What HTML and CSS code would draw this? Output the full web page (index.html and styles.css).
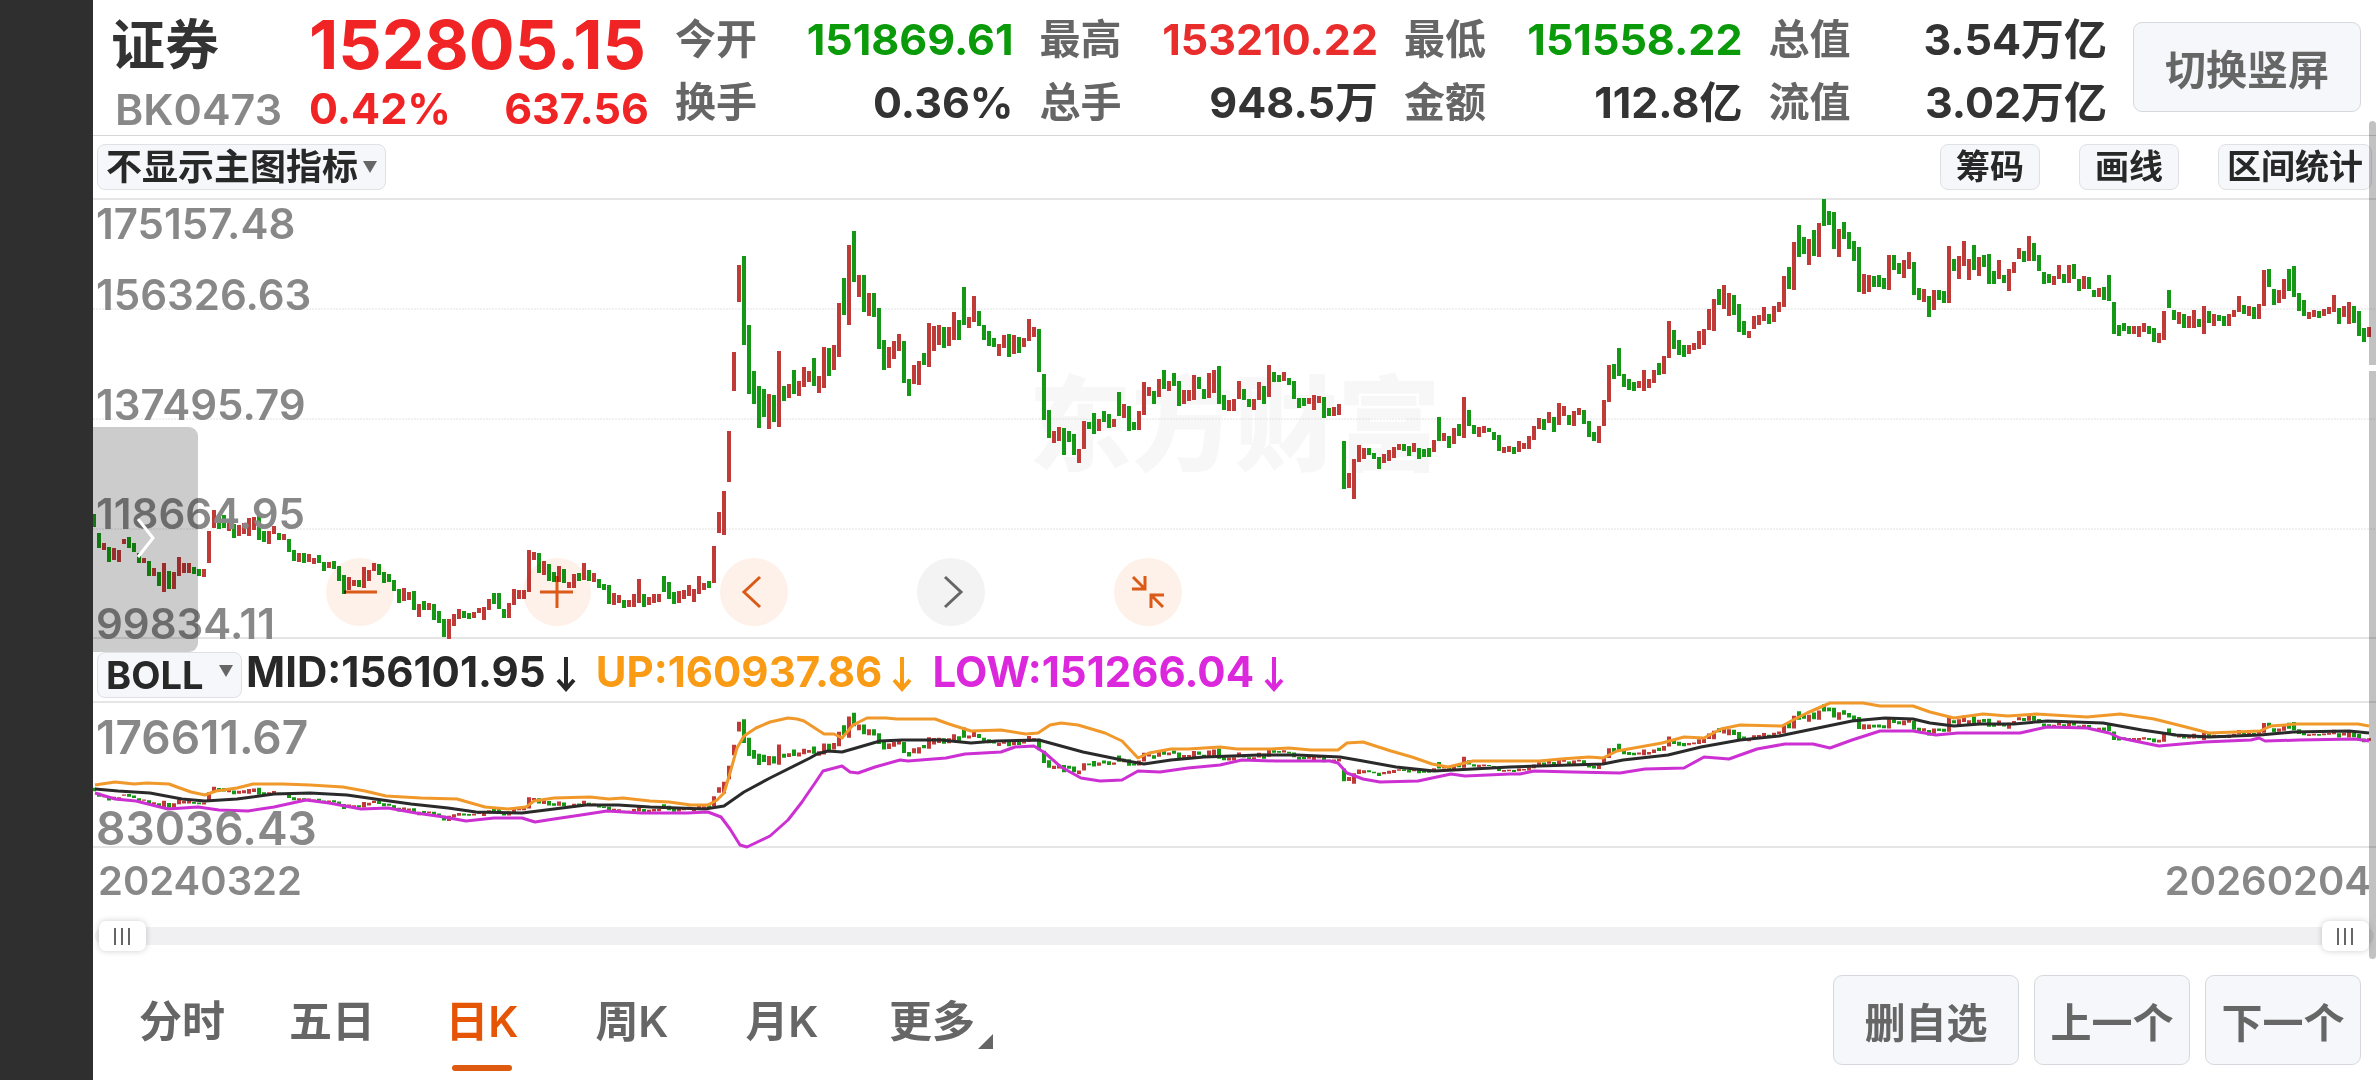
FILE: index.html
```html
<!DOCTYPE html>
<html lang="zh-CN">
<head>
  <meta charset="UTF-8" />
  <meta name="viewport" content="width=device-width, initial-scale=1.0"/>
  <title>证券 BK0473</title>
  <link rel="stylesheet" href="styles.css">
</head>
<body>

  <div class="side-bar"></div>

  <main class="page">
    <header class="quote-header">
      <div class="stock-name">
        <h1>证券</h1>
        <span>BK0473</span>
      </div>
      <div class="stock-price">
        <strong>152805.15</strong>
        <div class="change"><span>0.42%</span><span>637.56</span></div>
      </div>
      <dl class="quote-grid">
        <div><dt>今开</dt><dd class="down">151869.61</dd></div>
        <div><dt>最高</dt><dd class="up">153210.22</dd></div>
        <div><dt>最低</dt><dd class="down">151558.22</dd></div>
        <div><dt>总值</dt><dd>3.54万亿</dd></div>
        <div><dt>换手</dt><dd>0.36%</dd></div>
        <div><dt>总手</dt><dd>948.5万</dd></div>
        <div><dt>金额</dt><dd>112.8亿</dd></div>
        <div><dt>流值</dt><dd>3.02万亿</dd></div>
      </dl>
      <button type="button" class="btn">切换竖屏</button>
    </header>

    <div class="toolbar">
      <div class="select-box select-main">
        <select aria-label="主图指标">
          <option>不显示主图指标</option>
        </select>
        <svg class="caret" viewBox="0 0 14 12"><path d="M0 0h14L7 12z"/></svg>
      </div>
      <div class="toolbar-actions">
        <button type="button" class="btn-small">筹码</button>
        <button type="button" class="btn-small">画线</button>
        <button type="button" class="btn-small">区间统计</button>
      </div>
    </div>

    <section class="main-chart">
      <div class="watermark">东方财富</div>
      <svg class="plot" viewBox="0 0 2283 439" preserveAspectRatio="none">
        <path class="grid-dot" d="M0 110H2283M0 220H2283M0 330H2283"/>
        <path class="grid-line" d="M0 0H2283M0 439H2283"/>
        <path class="candle-up" id="mainUp"/>
        <path class="candle-down" id="mainDown"/>
      </svg>
      <div class="axis">
        <div><span>175157.48</span><span>156326.63</span></div>
        <div><span>137495.79</span></div>
        <div><span>118664.95</span></div>
        <div><span>99834.11</span></div>
      </div>
      <div class="chart-tools">
        <button type="button" class="round" aria-label="缩小">
          <svg viewBox="0 0 68 68"><path d="M18 34h33"/></svg>
        </button>
        <button type="button" class="round" aria-label="放大">
          <svg viewBox="0 0 68 68"><path d="M17 34h33M34 18v32"/></svg>
        </button>
        <button type="button" class="round" aria-label="左移">
          <svg viewBox="0 0 68 68"><path d="M40 19L24 34l16 15"/></svg>
        </button>
        <button type="button" class="round round-off" aria-label="右移">
          <svg viewBox="0 0 68 68"><path d="M28 19l16 15-16 15"/></svg>
        </button>
        <button type="button" class="round" aria-label="收起">
          <svg viewBox="0 0 68 68"><path d="M19 19l12 12M18 31h13V18M49 49L37 37M50 37H37v13"/></svg>
        </button>
      </div>
      <button type="button" class="drawer" aria-label="展开">
        <svg viewBox="0 0 20 40"><path d="M2 1l15 19L2 39"/></svg>
      </button>
    </section>

    <div class="boll-row">
      <div class="select-box select-boll">
        <select aria-label="副图指标">
          <option>BOLL</option>
        </select>
        <svg class="caret" viewBox="0 0 14 12"><path d="M0 0h14L7 12z"/></svg>
      </div>
      <span class="mid">MID:156101.95<svg class="arrow" viewBox="0 0 20 36"><path d="M10 1v32M2 24l8 9 8-9"/></svg></span>
      <span class="upper">UP:160937.86<svg class="arrow" viewBox="0 0 20 36"><path d="M10 1v32M2 24l8 9 8-9"/></svg></span>
      <span class="lower">LOW:151266.04<svg class="arrow" viewBox="0 0 20 36"><path d="M10 1v32M2 24l8 9 8-9"/></svg></span>
    </div>

    <section class="boll-chart">
      <svg class="plot" viewBox="0 0 2283 145" preserveAspectRatio="none">
        <path class="grid-line" d="M0 0H2283M0 145H2283"/>
        <path class="candle-up" id="bollUp"/>
        <path class="candle-down" id="bollDown"/>
        <polyline class="line-mid" id="lineMid"/>
        <polyline class="line-upper" id="lineUpper"/>
        <polyline class="line-lower" id="lineLower"/>
      </svg>
      <div class="boll-axis"><span>176611.67</span><span>83036.43</span></div>
    </section>

    <div class="dates"><span>20240322</span><span>20260204</span></div>

    <div class="range">
      <input type="range" min="0" max="100" value="0" aria-label="开始日期">
      <input type="range" min="0" max="100" value="100" aria-label="结束日期">
    </div>

    <footer class="bottom">
      <nav class="tabs">
        <a href="#">分时</a>
        <a href="#">五日</a>
        <a href="#" class="active">日K</a>
        <a href="#">周K</a>
        <a href="#">月K</a>
        <a href="#" class="more">更多</a>
      </nav>
      <div class="bottom-actions">
        <button type="button" class="btn btn-wide">删自选</button>
        <button type="button" class="btn">上一个</button>
        <button type="button" class="btn">下一个</button>
      </div>
    </footer>

    <div class="scroll-thumb thumb-top"></div>
    <div class="scroll-thumb thumb-bottom"></div>
  </main>

  <script src="chart.js"></script>
</body>
</html>
```
FILE: styles.css
```css
* {
  box-sizing: border-box;
}

body {
  font-family: Inter, 'Noto Sans CJK SC', sans-serif;
  margin: 0;
  min-height: 100vh;
  display: flex;
  background: #fff;
  color: #333;
}

h1, dl, dd {
  margin: 0;
}

button, select {
  font-family: inherit;
  cursor: pointer;
}

.side-bar {
  width: 93px;
  flex-shrink: 0;
  background: #2f2f2f;
}

.page {
  position: relative;
  flex: 1;
  min-width: 0;
  overflow: hidden;
  display: flex;
  flex-direction: column;
}

/* header */
.quote-header {
  display: flex;
  gap: 26px;
  height: 136px;
  padding: 8px 15px 0 18px;
  border-bottom: 1px solid #d6d6d6;
}

.stock-name {
  width: 172px;
}

.stock-name h1 {
  font-size: 54px;
  line-height: 76px;
  font-weight: 600;
}

.stock-name span {
  display: block;
  padding-left: 4px;
  font-size: 43px;
  line-height: 50px;
  font-weight: 600;
  color: #888;
}

.stock-price {
  width: 340px;
  color: #f02424;
}

.stock-price strong {
  display: block;
  font-size: 68px;
  line-height: 72px;
  font-weight: 700;
}

.change {
  display: flex;
  justify-content: space-between;
  font-size: 43px;
  line-height: 56px;
  font-weight: 700;
}

.quote-grid {
  flex: 1;
  display: grid;
  grid-template-columns: repeat(4, 1fr);
  column-gap: 26px;
  grid-auto-rows: 63px;
}

.quote-grid div {
  display: flex;
  justify-content: space-between;
  line-height: 63px;
  white-space: nowrap;
}

.quote-grid dt {
  font-size: 41px;
  font-weight: 600;
  color: #666;
}

.quote-grid dd {
  font-size: 43px;
  font-weight: 700;
}

.quote-grid .up {
  color: #e92c2c;
}

.quote-grid .down {
  color: #0a9a0a;
}

.btn {
  height: 90px;
  min-width: 156px;
  padding: 0 12px;
  border: 1px solid #d5d8dc;
  border-radius: 9px;
  background: #f6f7fa;
  color: #666;
  font-size: 41px;
  font-weight: 600;
  white-space: nowrap;
}

.quote-header .btn {
  margin-top: 14px;
  width: 228px;
}

/* toolbar */
.toolbar {
  display: flex;
  justify-content: space-between;
  height: 63px;
  padding: 8px 4px 0;
}

.select-box {
  position: relative;
  height: 46px;
}

.select-box select,
.btn-small {
  appearance: none;
  height: 46px;
  border: 1px solid #dfe1e5;
  border-radius: 8px;
  background: #f6f7fa;
  color: #282828;
  font-weight: 600;
  line-height: 44px;
}

.select-box select {
  width: 100%;
  padding: 0 8px;
  font-size: 36px;
}

.select-main {
  width: 289px;
}

.select-boll {
  width: 145px;
}

.select-boll select {
  font-size: 38px;
  font-weight: 700;
}

.caret {
  position: absolute;
  right: 9px;
  top: 17px;
  width: 14px;
  height: 12px;
  fill: #666;
  pointer-events: none;
}

.toolbar-actions {
  display: flex;
  gap: 39px;
}

.btn-small {
  min-width: 100px;
  padding: 0 8px;
  font-size: 34px;
  white-space: nowrap;
}

/* charts */
.main-chart {
  position: relative;
  height: 439px;
}

.boll-chart {
  position: relative;
  height: 145px;
}

.plot {
  position: relative;
  display: block;
  width: 100%;
  height: 100%;
  overflow: visible;
}

.plot path,
.plot polyline {
  fill: none;
}

.grid-line {
  stroke: #e5e5e5;
  stroke-width: 2;
}

.grid-dot {
  stroke: #e2e2e2;
  stroke-width: 1;
  stroke-dasharray: 2 1;
}

.candle-up {
  stroke: #c03a38;
  stroke-width: 4;
}

.candle-down {
  stroke: #159815;
  stroke-width: 4;
}

.line-mid,
.line-upper,
.line-lower {
  stroke-width: 3;
  stroke-linejoin: round;
}

.line-mid {
  stroke: #2a2a2a;
}

.line-upper {
  stroke: #f0992a;
}

.line-lower {
  stroke: #cc30d2;
}

.watermark {
  position: absolute;
  inset: 0;
  display: flex;
  align-items: center;
  justify-content: center;
  font-size: 103px;
  font-weight: 900;
  color: #f7f7f7;
}

.axis {
  position: absolute;
  inset: 0 auto 0 0;
  display: grid;
  grid-template-rows: repeat(4, 1fr);
  padding-left: 3px;
  font-size: 42px;
  line-height: 28px;
  font-weight: 600;
  color: #888;
}

.axis div {
  display: flex;
  flex-direction: column;
  justify-content: flex-end;
}

.axis div:first-child {
  justify-content: space-between;
  padding-top: 11px;
}

.chart-tools {
  position: absolute;
  left: 233px;
  bottom: 12px;
  display: flex;
  gap: 129px;
  mix-blend-mode: multiply;
}

.round {
  width: 68px;
  height: 68px;
  padding: 0;
  border: none;
  border-radius: 50%;
  background: #fef1e9;
}

.round svg {
  display: block;
  fill: none;
  stroke: #da5a18;
  stroke-width: 3;
}

.round-off {
  background: #f3f3f3;
}

.round-off svg {
  stroke: #666;
}

.drawer {
  position: absolute;
  left: 0;
  top: 228px;
  width: 105px;
  height: 225px;
  padding: 0;
  border: none;
  border-radius: 0 9px 9px 0;
  background: rgba(0, 0, 0, 0.2);
  z-index: 1;
}

.drawer svg {
  width: 20px;
  height: 40px;
  fill: none;
  stroke: #fff;
  stroke-width: 3;
}

.boll-row {
  display: flex;
  align-items: center;
  height: 64px;
  padding: 2px 4px 0;
  font-size: 42px;
  font-weight: 700;
  white-space: nowrap;
}

.boll-row .mid {
  margin: 0 20px 0 4px;
  color: #282828;
}

.boll-row .upper {
  margin-right: 20px;
  color: #f99b15;
}

.boll-row .lower {
  color: #dc28dc;
}

.arrow {
  width: 20px;
  height: 36px;
  margin-left: 10px;
  vertical-align: -5px;
  fill: none;
  stroke: currentColor;
  stroke-width: 4;
}

.boll-axis {
  position: absolute;
  inset: 0 auto 0 0;
  display: flex;
  flex-direction: column;
  justify-content: space-between;
  padding: 16px 0 0 3px;
  font-size: 46px;
  line-height: 38px;
  font-weight: 600;
  color: #888;
}

.dates {
  display: flex;
  justify-content: space-between;
  padding: 10px 5px 0 5px;
  font-size: 40px;
  line-height: 48px;
  font-weight: 600;
  color: #888;
}

/* date range */
.range {
  position: relative;
  height: 18px;
  margin: 22px 2px 0;
  border-radius: 9px;
  background: #f0f0f3;
}

.range input {
  appearance: none;
  position: absolute;
  left: 4px;
  right: 5px;
  top: -6px;
  width: calc(100% - 9px);
  height: 30px;
  margin: 0;
  background: none;
  pointer-events: none;
}

.range input::-webkit-slider-thumb {
  appearance: none;
  width: 47px;
  height: 30px;
  border-radius: 7px;
  background:
    linear-gradient(#666, #666) 15px 50% / 2px 17px no-repeat,
    linear-gradient(#666, #666) 22px 50% / 2px 17px no-repeat,
    linear-gradient(#666, #666) 29px 50% / 2px 17px no-repeat,
    #fff;
  box-shadow: 0 0 6px rgba(0, 0, 0, 0.2);
  pointer-events: auto;
}

/* bottom bar */
.bottom {
  display: flex;
  justify-content: space-between;
  padding: 30px 15px 0 14px;
}

.tabs {
  display: flex;
}

.tabs a {
  position: relative;
  width: 150px;
  height: 105px;
  font-size: 43px;
  line-height: 92px;
  font-weight: 600;
  text-align: center;
  text-decoration: none;
  color: #666;
}

.tabs .active {
  color: #e65505;
}

.tabs .active::after {
  content: '';
  position: absolute;
  left: 45px;
  bottom: 9px;
  width: 60px;
  height: 6px;
  border-radius: 3px;
  background: #de5a10;
}

.tabs .more::after {
  content: '';
  position: absolute;
  right: 14px;
  bottom: 31px;
  border-left: 15px solid transparent;
  border-bottom: 15px solid #666;
}

.bottom-actions {
  display: flex;
  gap: 15px;
}

.btn-wide {
  width: 186px;
}

.scroll-thumb {
  position: absolute;
  right: 0;
  width: 7px;
  background: rgba(0, 0, 0, 0.24);
  z-index: 2;
}

.thumb-top {
  top: 121px;
  height: 244px;
  border-radius: 4px 4px 0 0;
}

.thumb-bottom {
  top: 371px;
  height: 588px;
  border-radius: 0 0 4px 4px;
}
```
FILE: chart.js
```js
// one candle per item: r = up, g = down, then the top and bottom of the bar
const candles = `
g315-328 g334-349 r344-351 g348-363 r349-361 r351-363 r340-345 g338-349 g344-353 g354-364
r359-364 g362-377 r369-377 g373-387 r364-393 g372-390 r373-390 r358-377 r364-374 r364-374
g368-375 g370-377 r370-378 r332-364 r311-329 g316-330 g316-329 r321-332 g325-339 r326-337
r324-335 r319-337 r318-331 g315-341 g332-343 r332-345 r327-335 g334-341 r335-341 g340-353
g351-362 r354-363 g354-364 r355-363 r359-365 g356-364 g363-372 r363-369 g362-370 g367-382
g376-395 r378-391 r381-387 g381-388 r368-389 r371-382 r364-372 g365-376 g373-384 g375-383
g381-392 g390-404 r389-402 r393-401 g392-411 r405-418 g402-411 r404-411 g405-421 g412-424
g420-438 r420-440 r415-427 r410-420 g412-419 g414-420 r413-419 r409-414 r408-421 r400-411
g394-405 g394-410 g410-419 r404-419 r390-406 r391-400 r391-400 r351-393 r353-361 g354-374
r362-376 g365-382 g373-383 r367-383 g370-384 r383-389 r375-389 g374-382 r364-381 g371-382
r374-383 g380-389 g385-391 g386-405 r394-406 r396-404 g401-409 r401-408 r395-408 r380-404
g395-408 r398-406 r395-404 r395-403 g377-393 g383-400 g393-405 r392-404 r391-400 r386-397
r390-403 r377-395 r384-391 g382-389 r347-384 r313-334 r292-336 r232-283 r153-192 r66-103
g57-146 g126-195 g172-205 g187-229 g190-218 r195-230 g196-223 r152-228 g187-202 r185-199
g171-195 r182-197 r168-188 r172-183 g159-187 r177-194 r148-189 g149-177 r146-171 r104-158
g79-116 r46-126 g32-83 r76-98 g76-113 r94-117 g94-118 g109-150 g141-171 r148-169
r142-160 r135-152 g142-184 g180-197 r166-185 r162-186 g154-166 r124-168 r127-152 r126-146
g128-149 r128-147 r113-141 g121-141 g88-126 r118-129 r97-123 g112-127 g126-141 g132-147
g139-148 r145-157 r136-149 g135-158 r136-155 g138-154 r139-148 r120-142 r128-138 g130-173
g175-221 g211-239 r232-244 r228-242 g229-256 g232-243 g235-256 r250-264 r222-250 g223-230
g214-235 r220-232 g212-223 g215-229 r220-228 g193-217 r205-219 g207-232 g223-231 r212-231
r183-216 r188-197 g192-205 r180-198 g171-190 r182-192 g174-187 g182-207 r191-205 r191-202
r176-201 g178-190 g190-200 r174-199 r171-194 g167-205 g196-211 r201-212 r200-212 r182-200
g190-201 g200-208 r200-211 r183-201 g187-205 r166-198 g173-183 g176-183 r173-182 g179-186
g182-200 g199-209 g199-207 r199-205 r196-211 r197-204 g198-219 g209-217 r208-217 r205-216
g242-290 r274-289 r260-300 r246-263 r249-260 g249-256 g254-260 g258-270 r255-264 r251-262
r248-259 r245-251 g245-252 g247-257 r244-253 g249-260 g250-258 g249-258 r241-253 g218-242
r234-242 g237-249 r229-245 g225-237 r198-239 g211-227 g226-235 r228-238 r227-234 g229-233
g233-241 g236-252 r248-254 r247-253 g248-255 r242-253 r244-250 r237-250 r227-241 r219-230
g220-231 r213-224 g218-233 r204-226 r207-217 g216-226 r212-227 r209-216 g211-225 g222-238
g233-242 r227-244 r201-227 r166-203 g165-180 g149-177 g175-188 g180-191 g183-192 r182-189
r171-192 r180-189 r171-184 g164-176 r157-175 r122-159 g131-150 g141-156 g146-158 r146-155
r144-151 r132-150 r130-146 r110-131 r100-132 g90-106 r86-110 r94-117 g96-116 g105-133
g122-136 r132-139 r117-130 r116-126 r108-122 g115-125 r107-123 r103-113 r77-108 g68-90
r43-91 g26-58 g38-55 r40-66 g31-57 r24-58 g0-27 g12-26 g13-50 r30-58
g23-40 g33-50 g42-62 g48-93 r75-95 r76-93 g77-88 g76-88 g79-90 r56-91
g56-71 g64-75 r61-79 r53-70 g63-96 g89-101 r90-103 g97-118 r91-111 g91-101
g92-104 r47-104 g60-72 r57-80 r42-67 r60-81 g46-71 r58-77 g56-68 g55-85
g72-85 r61-80 g76-84 r70-92 r63-74 r49-60 g52-63 r37-62 g44-62 g56-72
g73-85 g75-84 r77-86 r66-80 g75-84 r66-84 g65-80 g80-92 r77-90 g78-90
g91-98 r89-98 g88-101 g76-102 g103-135 g126-137 g124-132 g127-135 r127-135 r127-138
r124-133 g127-135 g129-143 r134-144 r112-141 g91-109 g111-121 r113-125 g115-129 r117-129
r111-129 g120-128 r107-135 g112-124 r115-127 g116-122 g117-127 r115-127 r111-118 r97-113
g106-115 r107-117 g108-120 r105-120 r71-107 g70-88 g90-106 r91-104 r80-100 g70-92
g67-98 g94-112 g101-117 r113-120 r111-118 g112-119 r110-117 r108-115 r96-113 g109-125
r107-118 r103-125 g107-124 g112-137 g129-143 r128-138
`.trim().split(/\s+/).map(item => {
  const [top, bottom] = item.slice(1).split('-').map(Number);
  return { up: item[0] === 'r', top, bottom };
});

const upper = `2,83 22,80 41,82 54,81 76,82 84,85 98,90 112,93 123,89 144,86 160,82 190,82 217,83 250,85
272,89 293,94 328,96 364,97 378,101 392,105 415,107 433,105 441,99 461,96 497,95 516,97 530,96 557,99
576,100 598,103 615,103 624,98 631,91 637,71 644,46 651,34 663,26 677,20 695,16 704,17 711,19 731,32
741,32 749,36 760,23 774,16 793,16 804,17 842,17 856,22 878,29 908,28 933,32 945,31 957,23 968,21
985,23 1012,31 1029,39 1045,56 1056,51 1078,47 1095,47 1127,45 1144,47 1177,47 1196,46 1218,48
1245,48 1254,41 1270,40 1298,49 1319,55 1339,62 1355,65 1380,59 1417,59 1446,59 1468,57 1496,55
1510,56 1524,49 1541,46 1569,41 1591,35 1611,36 1628,27 1647,23 1689,24 1700,18 1714,11 1737,1
1770,1 1787,4 1820,4 1837,10 1861,16 1890,12 1915,14 1943,12 1994,15 2027,12 2061,17 2089,24
2116,31 2167,29 2178,24 2203,22 2265,22 2276,24`;

const mid = `2,87 25,89 57,91 89,97 112,99 144,97 181,92 217,91 254,93 282,97 318,102 355,106 383,110
429,111 461,107 493,103 525,103 557,105 612,107 631,104 651,90 677,76 717,56 724,52 735,49 749,50
763,46 787,39 809,38 848,38 878,41 903,39 946,38 990,50 1034,59 1051,62 1078,58 1111,55 1166,53
1204,53 1247,55 1270,59 1303,65 1341,69 1380,67 1417,65 1446,64 1510,62 1530,58 1575,53 1608,45
1647,38 1686,34 1725,26 1759,19 1792,16 1820,17 1837,21 1861,24 1887,22 1921,22 1954,19 2010,21
2049,28 2083,33 2116,35 2167,33 2200,30 2256,29 2276,31`;

const lower = `2,91 22,97 43,99 75,107 105,105 126,108 155,109 181,105 213,98 236,101 268,107 295,106
323,111 351,115 373,119 401,116 429,116 442,120 461,117 488,113 514,109 548,111 594,111 615,110
628,115 637,127 647,143 654,145 677,134 695,118 709,100 713,94 722,81 730,69 749,64 757,70 765,71
782,65 807,58 815,59 853,56 872,52 908,50 922,45 941,44 952,51 968,65 988,76 1007,79 1029,78
1045,69 1067,70 1095,66 1127,63 1149,58 1182,59 1237,59 1245,61 1254,71 1270,77 1287,80 1325,79
1358,72 1372,74 1417,72 1427,72 1441,69 1480,70 1527,71 1552,67 1591,66 1611,55 1636,57 1664,47
1692,42 1720,42 1737,46 1759,38 1787,29 1820,29 1843,33 1865,31 1927,31 1954,25 1994,26 2016,31
2027,36 2066,44 2111,40 2158,38 2166,36 2172,39 2206,38 2262,37 2276,39`;

// the small chart shows the same candles on a wider price scale
function drawCandles(id, up, toY) {
  const d = candles
    .map((c, i) => c.up === up ? `M${i * 5 + 1} ${toY(c.top)}V${toY(c.bottom)}` : '')
    .join('');
  document.getElementById(id).setAttribute('d', d);
}

drawCandles('mainUp', true, y => y);
drawCandles('mainDown', false, y => y);
drawCandles('bollUp', true, y => 2.25 + y * 0.2653);
drawCandles('bollDown', false, y => 2.25 + y * 0.2653);

document.getElementById('lineUpper').setAttribute('points', upper);
document.getElementById('lineMid').setAttribute('points', mid);
document.getElementById('lineLower').setAttribute('points', lower);
```
